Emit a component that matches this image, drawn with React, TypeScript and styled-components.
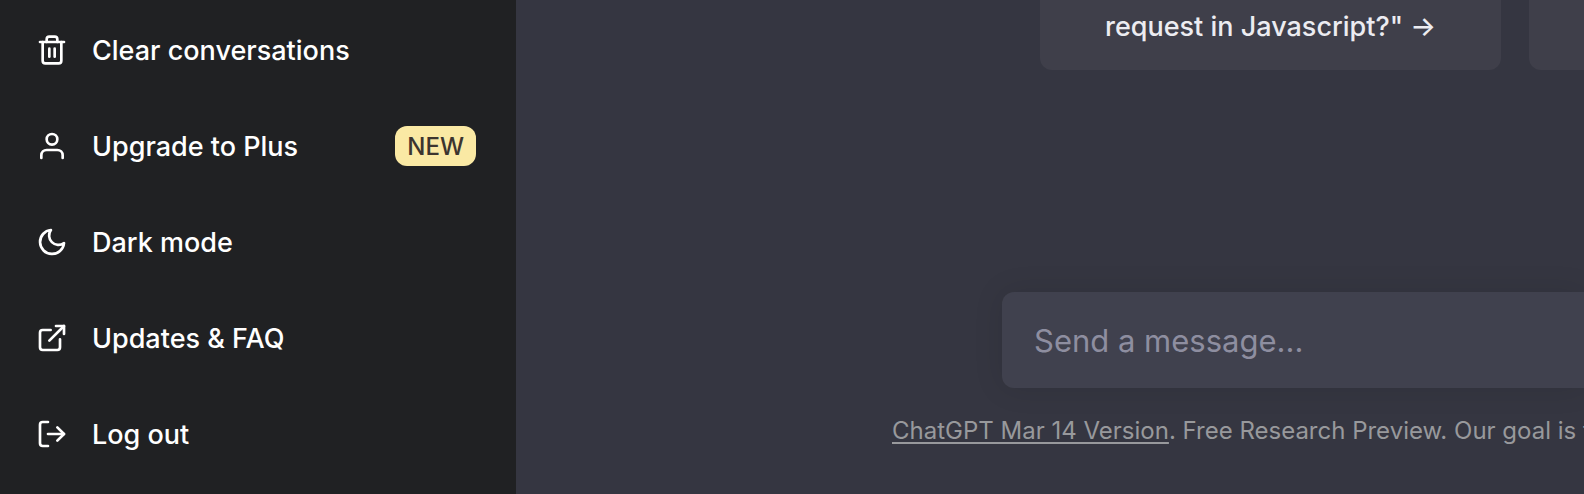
import React from "react";
import styled, { createGlobalStyle } from "styled-components";

const GlobalStyle = createGlobalStyle`
  *, *::before, *::after { box-sizing: border-box; }
  body {
    margin: 0;
    background: #353641;
    font-family: Inter, "Liberation Sans", sans-serif;
    -webkit-font-smoothing: antialiased;
  }
`;

const Page = styled.div`
  display: flex;
  min-height: 100vh;
  overflow: hidden;
`;

const Sidebar = styled.nav`
  flex: 0 0 516px;
  display: flex;
  flex-direction: column;
  justify-content: flex-end;
  gap: 8px;
  padding: 0 12px 16px;
  background: #202123;
`;

const NavItem = styled.a`
  display: flex;
  align-items: center;
  gap: 24px;
  height: 88px;
  padding: 0 24px;
  border-radius: 12px;
  color: #fff;
  font-size: 27px;
  font-weight: 450;
  line-height: 40px;
  text-decoration: none;

  &:hover { background: #2a2b32; }
`;

const NavLabel = styled.span`
  padding-top: 2px;
`;

const Icon = styled.svg`
  flex: none;
  width: 32px;
  height: 32px;
  fill: none;
  stroke: currentColor;
  stroke-width: 2;
  stroke-linecap: round;
  stroke-linejoin: round;
`;

const Badge = styled.span`
  margin: 0 4px 0 auto;
  padding: 2px 12px 0;
  border-radius: 12px;
  background: #fae9a4;
  color: #3c352f;
  font-size: 24px;
  font-weight: 500;
  line-height: 38px;
`;

const Main = styled.main`
  flex: 1;
  min-width: 0;
  display: flex;
  flex-direction: column;
  justify-content: space-between;
  overflow: hidden;
  background: #353641;
`;

const Examples = styled.div`
  display: flex;
  gap: 28px;
  padding-left: 524px;
`;

const ExampleCard = styled.button`
  flex: 0 0 461px;
  min-height: 70px;
  padding: 7px 24px 23px;
  border: 0;
  border-radius: 0 0 12px 12px;
  background: #3f3f4a;
  color: #ececf1;
  font-family: inherit;
  font-size: 27px;
  font-weight: 450;
  line-height: 40px;
  white-space: nowrap;
`;

const Composer = styled.form`
  display: flex;
  flex-direction: column;
`;

const MessageInput = styled.input`
  height: 96px;
  margin-left: 486px;
  padding: 0 32px;
  border: 0;
  border-radius: 12px 0 0 12px;
  background: #40414e;
  box-shadow: 0 0 30px rgba(0, 0, 0, 0.1);
  color: #fff;
  font-family: inherit;
  font-size: 31px;
  outline: none;

  &::placeholder { color: #8e8ea0; opacity: 1; }
`;

const Notice = styled.p`
  margin: 0;
  padding: 27px 0 47px 376px;
  color: #98999c;
  font-size: 24px;
  line-height: 32px;
  white-space: nowrap;
`;

const NoticeLink = styled.a`
  color: inherit;
  text-decoration: underline;
  text-decoration-thickness: 2px;
  text-underline-offset: 3px;
  text-decoration-skip-ink: none;
`;

const icons = {
  trash: (
    <>
      <polyline points="3 6 5 6 21 6" />
      <path d="M19 6v14a2 2 0 0 1-2 2H7a2 2 0 0 1-2-2V6m3 0V4a2 2 0 0 1 2-2h4a2 2 0 0 1 2 2v2" />
      <line x1="10" y1="11" x2="10" y2="17" />
      <line x1="14" y1="11" x2="14" y2="17" />
    </>
  ),
  user: (
    <>
      <path d="M20 21v-2a4 4 0 0 0-4-4H8a4 4 0 0 0-4 4v2" />
      <circle cx="12" cy="7" r="4" />
    </>
  ),
  moon: <path d="M21 12.79A9 9 0 1 1 11.21 3 7 7 0 0 0 21 12.79z" />,
  external: (
    <>
      <path d="M18 13v6a2 2 0 0 1-2 2H5a2 2 0 0 1-2-2V8a2 2 0 0 1 2-2h6" />
      <polyline points="15 3 21 3 21 9" />
      <line x1="10" y1="14" x2="21" y2="3" />
    </>
  ),
  logout: (
    <>
      <path d="M9 21H5a2 2 0 0 1-2-2V5a2 2 0 0 1 2-2h4" />
      <polyline points="16 17 21 12 16 7" />
      <line x1="21" y1="12" x2="9" y2="12" />
    </>
  ),
};

const items: { icon: keyof typeof icons; label: string; badge?: string }[] = [
  { icon: "trash", label: "Clear conversations" },
  { icon: "user", label: "Upgrade to Plus", badge: "NEW" },
  { icon: "moon", label: "Dark mode" },
  { icon: "external", label: "Updates & FAQ" },
  { icon: "logout", label: "Log out" },
];

export default function App() {
  return (
    <>
      <GlobalStyle />
      <Page>
        <Sidebar>
          {items.map(({ icon, label, badge }) => (
            <NavItem href="#" key={label}>
              <Icon viewBox="0 0 24 24" aria-hidden="true">{icons[icon]}</Icon>
              <NavLabel>{label}</NavLabel>
              {badge && <Badge>{badge}</Badge>}
            </NavItem>
          ))}
        </Sidebar>
        <Main>
          <Examples>
            <ExampleCard type="button">request in Javascript?" →</ExampleCard>
            <ExampleCard type="button" aria-label="Example" />
          </Examples>
          <Composer>
            <MessageInput type="text" aria-label="Message" placeholder="Send a message..." />
            <Notice>
              <NoticeLink href="#">ChatGPT Mar 14 Version</NoticeLink>. Free Research Preview. Our goal is t
            </Notice>
          </Composer>
        </Main>
      </Page>
    </>
  );
}
